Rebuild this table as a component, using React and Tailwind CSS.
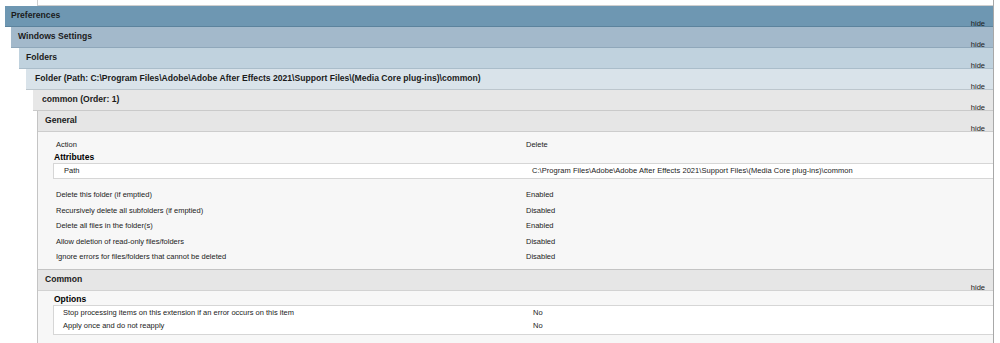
import React from 'react';

// Group header bar with the "hide" link sitting at the bottom-right corner
function Bar({ title, className, textPad }) {
    return (
        <div className={`flex h-[21px] justify-between border-b ${className}`}>
            <span className={`pt-[4px] text-[8.6px] font-bold leading-[10px] ${textPad}`}>{title}</span>
            <span className="self-end pr-[8px] leading-[4px]">hide</span>
        </div>
    );
}

function Row({ label, value }) {
    return (
        <div className="flex h-[15.5px] items-center">
            <span className="w-[470px]">{label}</span>
            <span>{value}</span>
        </div>
    );
}

export default function App() {
    const settings = [
        ['Delete this folder (if emptied)', 'Enabled'],
        ['Recursively delete all subfolders (if emptied)', 'Disabled'],
        ['Delete all files in the folder(s)', 'Enabled'],
        ['Allow deletion of read-only files/folders', 'Disabled'],
        ['Ignore errors for files/folders that cannot be deleted', 'Disabled'],
    ];

    return (
        <div className="h-[343px] w-[1000px] overflow-hidden bg-white font-['Liberation_Sans',Arial,sans-serif] text-[7.5px] text-[#1b1b1b]">
            <div className="h-full w-[994px] border-r border-[#a8a8a8]">
                <div className="ml-[37px] h-[6px] border-b border-l border-[#cfcfcf] bg-white" />
                <div className="pl-[5px]">
                    <Bar title="Preferences" className="border-[#5c839d] bg-[#6e97b2]" textPad="pl-[6px]" />
                    <div className="pl-[6px]">
                        <Bar title="Windows Settings" className="border-[#8fa7ba] bg-[#a3b9cb]" textPad="pl-[7px]" />
                        <div className="pl-[8px]">
                            <Bar title="Folders" className="border-[#aabdca] bg-[#c0d2de]" textPad="pl-[7px]" />
                            <div className="pl-[7px]">
                                <Bar
                                    title="Folder (Path: C:\Program Files\Adobe\Adobe After Effects 2021\Support Files\(Media Core plug-ins)\common)"
                                    className="border-[#bcc6cd] bg-[#d9e3ea]"
                                    textPad="pl-[9px]"
                                />
                                <div className="pl-[7px]">
                                    <Bar title="common (Order: 1)" className="border-[#cacaca] bg-[#e7e7e7]" textPad="pl-[9px]" />
                                    <div className="pl-[4px]">
                                        {/* General */}
                                        <div className="border-l border-[#c4c4c4]">
                                            <Bar title="General" className="border-[#cdcdcd] bg-[#e6e6e6]" textPad="pl-[7px]" />
                                            <div className="bg-[#f7f7f7] pt-[6px] pb-[4px]">
                                                <div className="flex h-[14px] items-center pl-[18px]">
                                                    <span className="w-[470px]">Action</span>
                                                    <span>Delete</span>
                                                </div>
                                                <div className="h-[11px] pl-[16px] text-[8.5px] font-bold leading-[11px] text-black">Attributes</div>
                                                <div className="ml-[15px] flex h-[16px] items-center border-y border-l border-[#d6d6d6] bg-white pl-[10px]">
                                                    <span className="w-[468px]">Path</span>
                                                    <span className="tracking-[0.05px]">C:\Program Files\Adobe\Adobe After Effects 2021\Support Files\(Media Core plug-ins)\common</span>
                                                </div>
                                                <div className="mt-[8px] pl-[18px]">
                                                    {settings.map(([label, value]) => (
                                                        <Row key={label} label={label} value={value} />
                                                    ))}
                                                </div>
                                            </div>
                                            {/* Common */}
                                            <div className="border-t border-[#c4c4c4]">
                                                <Bar title="Common" className="border-[#d2d2d2] bg-[#e6e6e6]" textPad="pl-[7px]" />
                                                <div className="h-[80px] bg-[#f7f7f7] pt-[3px]">
                                                    <div className="h-[11px] pl-[16px] text-[8.5px] font-bold leading-[11px] text-black">Options</div>
                                                    <div className="ml-[15px] border-y border-l border-[#d6d6d6] bg-white py-[1px] pl-[9px]">
                                                        <div className="flex h-[13px] items-center">
                                                            <span className="w-[470px]">Stop processing items on this extension if an error occurs on this item</span>
                                                            <span>No</span>
                                                        </div>
                                                        <div className="flex h-[13px] items-center">
                                                            <span className="w-[470px]">Apply once and do not reapply</span>
                                                            <span>No</span>
                                                        </div>
                                                    </div>
                                                </div>
                                            </div>
                                        </div>
                                    </div>
                                </div>
                            </div>
                        </div>
                    </div>
                </div>
            </div>
        </div>
    );
}
